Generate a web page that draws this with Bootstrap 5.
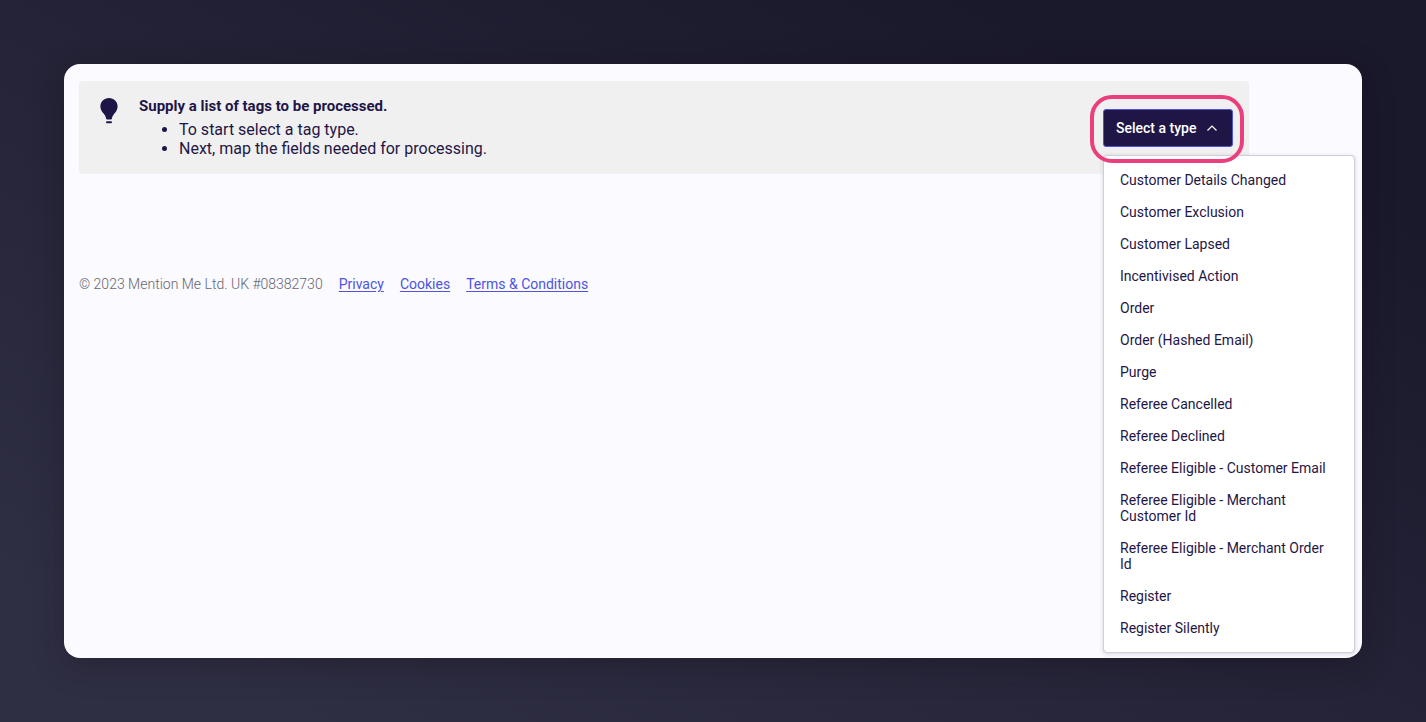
<!DOCTYPE html>
<html lang="en">
<head>
<meta charset="utf-8">
<meta name="viewport" content="width=device-width, initial-scale=1">
<title>Tag processing</title>
<link href="https://cdn.jsdelivr.net/npm/bootstrap@5.3.0/dist/css/bootstrap.min.css" rel="stylesheet">
<style>
  :root { --ink: #1f1646; --brand: #4e54e0; }
  body {
    font-family: Roboto, "Liberation Sans", sans-serif;
    color: var(--ink);
    background: linear-gradient(to top right, #2f2f44 10%, #1a182b 85%);
  }
  .stage { min-height: 100vh; padding: 64px; }
  .panel { background: #fafaff; border-radius: 16px; padding: 17px 15px; box-shadow: 0 8px 32px rgba(20, 10, 20, .3); }
  .tip { max-width: 1170px; background: #f0f0f0; border-radius: 4px; padding: 16px; }
  .tip-icon { width: 28px; height: 28px; }
  .tip-body { margin-left: 16px; line-height: 19px; }
  .tip-title { font-size: 15px; font-weight: 700; line-height: 19px; margin-bottom: 4px; }
  .tip-list { padding-left: 40px; }
  .type-picker { margin-top: 12px; }
  .type-picker::after {
    content: ""; position: absolute; z-index: 1100; inset: -14px -11px -16px -13px;
    border: 4px solid #eb3f7d; border-radius: 22px; pointer-events: none;
  }
  .btn-type {
    --bs-btn-color: #fff; --bs-btn-bg: var(--ink); --bs-btn-border-color: var(--brand);
    --bs-btn-hover-color: #fff; --bs-btn-hover-bg: #2c2160; --bs-btn-hover-border-color: var(--brand);
    --bs-btn-active-color: #fff; --bs-btn-active-bg: var(--ink); --bs-btn-active-border-color: var(--brand);
    width: 130px; height: 38px; padding: 0 11px 0 12px; border-radius: 3px;
    font-size: 14px; font-weight: 500; line-height: 16px;
  }
  .type-menu {
    top: 100%; left: 0; width: 252px; margin-top: 8px; padding: 8px 0;
    border: 1px solid #cfcddb; border-radius: 4px; box-shadow: 0 1px 4px rgba(31, 22, 70, .16);
  }
  .type-menu .dropdown-item { padding: 8px 16px; font-size: 14px; line-height: 16px; color: var(--ink); white-space: normal; }
  .legal { margin-top: 102px; font-size: 14px; line-height: 16px; gap: 16px; }
  .legal-owner { font-weight: 300; color: #66666e; }
  .legal a { color: var(--brand); text-underline-offset: 2px; }
</style>
</head>
<body>
<div class="stage d-flex flex-column">
  <main class="panel flex-grow-1">
    <section class="tip d-flex align-items-start">
      <svg class="tip-icon flex-shrink-0" viewBox="0 0 28 28" aria-hidden="true">
        <path fill="#1f1646" d="M14 1C9 1 5.400 4.700 5.400 9.400c0 3 1.500 5.200 3.400 7.400 1.300 1.500 2 3 2.300 4.700.1.600.4.900 1 .9h3.800c.6 0 .9-.3 1-.9.3-1.700 1-3.200 2.300-4.700 1.900-2.200 3.400-4.400 3.400-7.400C22.600 4.700 19 1 14 1z"/>
        <rect x="11" y="24.300" width="6" height="2" rx="1" fill="#1f1646"/>
      </svg>
      <div class="tip-body flex-grow-1">
        <h1 class="tip-title">Supply a list of tags to be processed.</h1>
        <ul class="tip-list mb-0">
          <li>To start select a tag type.</li>
          <li>Next, map the fields needed for processing.</li>
        </ul>
      </div>
      <div class="type-picker dropdown flex-shrink-0">
        <button class="btn btn-type d-flex align-items-center justify-content-between" type="button" data-bs-toggle="dropdown" data-bs-display="static" aria-expanded="true">
          Select a type
          <svg width="18" height="16" viewBox="0 0 18 16" fill="none" stroke="#fff" stroke-width="1.200" aria-hidden="true"><path d="M4.500 10.500 9 6l4.500 4.500"/></svg>
        </button>
        <ul class="dropdown-menu type-menu show">
          <li><a class="dropdown-item" href="#">Customer Details Changed</a></li>
          <li><a class="dropdown-item" href="#">Customer Exclusion</a></li>
          <li><a class="dropdown-item" href="#">Customer Lapsed</a></li>
          <li><a class="dropdown-item" href="#">Incentivised Action</a></li>
          <li><a class="dropdown-item" href="#">Order</a></li>
          <li><a class="dropdown-item" href="#">Order (Hashed Email)</a></li>
          <li><a class="dropdown-item" href="#">Purge</a></li>
          <li><a class="dropdown-item" href="#">Referee Cancelled</a></li>
          <li><a class="dropdown-item" href="#">Referee Declined</a></li>
          <li><a class="dropdown-item" href="#">Referee Eligible - Customer Email</a></li>
          <li><a class="dropdown-item" href="#">Referee Eligible - Merchant Customer Id</a></li>
          <li><a class="dropdown-item" href="#">Referee Eligible - Merchant Order Id</a></li>
          <li><a class="dropdown-item" href="#">Register</a></li>
          <li><a class="dropdown-item" href="#">Register Silently</a></li>
        </ul>
      </div>
    </section>
    <footer class="legal d-flex flex-wrap">
      <span class="legal-owner">© 2023 Mention Me Ltd. UK #08382730</span>
      <a href="#">Privacy</a>
      <a href="#">Cookies</a>
      <a href="#">Terms &amp; Conditions</a>
    </footer>
  </main>
</div>
<script src="https://cdn.jsdelivr.net/npm/bootstrap@5.3.0/dist/js/bootstrap.bundle.min.js"></script>
</body>
</html>
